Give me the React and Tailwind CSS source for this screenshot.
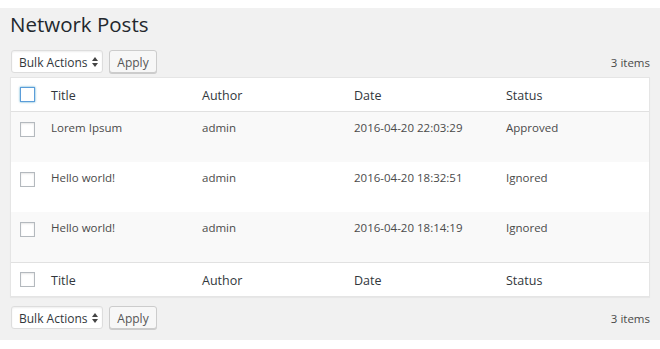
export default function App() {
  const rows = [
    { title: "Lorem Ipsum", author: "admin", date: "2016-04-20 22:03:29", status: "Approved", alt: true },
    { title: "Hello world!", author: "admin", date: "2016-04-20 18:32:51", status: "Ignored", alt: false },
    { title: "Hello world!", author: "admin", date: "2016-04-20 18:14:19", status: "Ignored", alt: true },
  ];
  const grid = "grid grid-cols-[30px_151px_152px_152px_1fr]";
  const Checkbox = ({ focused }) => (
    <span
      className={
        "block w-[15px] h-[15px] bg-white " +
        (focused
          ? "border border-[#5b9dd9] shadow-[0_0_2px_rgba(30,140,190,0.8)]"
          : "border border-[#b4b9be] shadow-[inset_0_1px_2px_rgba(0,0,0,0.1)]")
      }
    />
  );
  const Nav = () => (
    <div className="flex items-center h-[23px]">
      <div className="flex items-center justify-between w-[92px] h-[23px] pl-[7px] pr-[3px] bg-white border border-[#ddd] rounded-[3px] shadow-[inset_0_1px_2px_rgba(0,0,0,0.07)] text-[12px] text-[#32373c]">
        <span className="pt-[2px]">Bulk Actions</span>
        <svg width="6" height="10" viewBox="0 0 6 10" className="mr-[1px] mt-[1px]">
          <path d="M3 0 L6 4 L0 4 Z" fill="#444" />
          <path d="M3 10 L6 6 L0 6 Z" fill="#444" />
        </svg>
      </div>
      <div className="ml-[6px] flex items-center justify-center w-[48px] h-[23px] pt-[2px] bg-[#f7f7f7] border border-[#ccc] rounded-[3px] shadow-[0_1px_0_#ccc] text-[12px] text-[#555]">
        Apply
      </div>
      <div className="ml-auto pt-[2px] text-[11.5px] text-[#4a4a4a]">3 items</div>
    </div>
  );
  const Header = ({ top }) => (
    <div
      className={
        grid +
        " h-[34px] items-center bg-white text-[12.5px] text-[#32373c] " +
        (top ? "border-b border-[#e1e1e1]" : "border-t border-[#e1e1e1]")
      }
    >
      <div className="pl-[9px]">
        <Checkbox focused={top} />
      </div>
      <div className="pl-[10px] pt-[4px]">Title</div>
      <div className="pl-[10px] pt-[4px]">Author</div>
      <div className="pl-[10px] pt-[4px]">Date</div>
      <div className="pl-[10px] pt-[4px]">Status</div>
    </div>
  );
  return (
    <div className="w-[660px] h-[349px] bg-white pt-2" style={{ fontFamily: '"Open Sans", sans-serif' }}>
      <div className="h-[332px] bg-[#f1f1f1] px-[10px] pt-[2px]">
        <h1 className="text-[20.5px] leading-[28px] text-[#23282d] font-normal">Network Posts</h1>
        <div className="mt-[12px] pl-[1px]">
          <Nav />
        </div>
        <div className="mt-[4px] bg-white border border-[#e5e5e5] shadow-[0_1px_1px_rgba(0,0,0,0.04)]">
          <Header top />
          {rows.map((r, i) => (
            <div
              key={i}
              className={grid + " h-[50px] text-[11.5px] text-[#4a4a4a] " + (r.alt ? "bg-[#f9f9f9]" : "bg-white")}
            >
              <div className="pl-[9px] pt-[10px]">
                <Checkbox />
              </div>
              <div className="pl-[10px] pt-[7px]">{r.title}</div>
              <div className="pl-[10px] pt-[7px]">{r.author}</div>
              <div className="pl-[10px] pt-[7px]">{r.date}</div>
              <div className="pl-[10px] pt-[7px]">{r.status}</div>
            </div>
          ))}
          <Header />
        </div>
        <div className="mt-[9px] pl-[1px]">
          <Nav />
        </div>
      </div>
    </div>
  );
}
